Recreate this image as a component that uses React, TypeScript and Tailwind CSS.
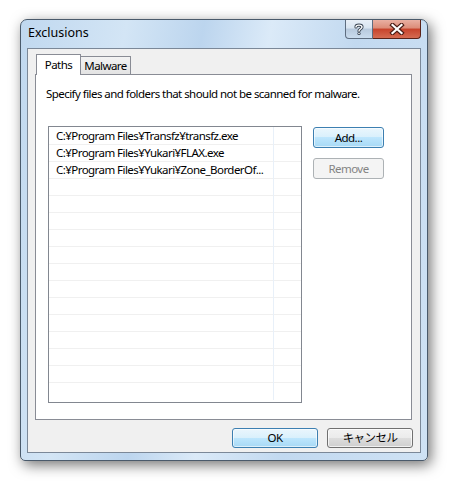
import React from "react";

const font = { fontFamily: '"Noto Sans", "Noto Sans CJK JP", sans-serif' };

function Row({ text }: { text?: string }) {
  return (
    <div className="h-[17px] border-b border-[#f0f0f0] flex items-center pl-[7px] leading-none text-black whitespace-nowrap overflow-hidden">
      {text ?? ""}
    </div>
  );
}

export default function App() {
  const items = [
    "C:¥Program Files¥Transfz¥transfz.exe",
    "C:¥Program Files¥Yukari¥FLAX.exe",
    "C:¥Program Files¥Yukari¥Zone_BorderOf...",
  ];
  const rows = Array.from({ length: 15 }, (_, i) => items[i]);
  return (
    <div className="w-[452px] h-[484px] bg-white pt-[19px] pl-[20px] text-[11.5px] tracking-[-0.55px]" style={font}>
      <div className="relative w-[408px] h-[442px] rounded-t-[7px] rounded-b-[5px] border border-[#4a5a6b] shadow-[3px_4px_14px_rgba(0,0,0,0.55)] bg-[linear-gradient(100deg,#c0d8ef_0%,#d3e5f5_22%,#bcd5ee_38%,#dbeaf8_52%,#c2d9f0_70%,#cfe2f4_100%)] flex flex-col pl-[6px] pr-[6px] pb-[7px]">
        {/* caption */}
        <div className="h-[28px] flex items-start justify-between shrink-0">
          <div className="pl-[1px] pt-[5px] text-[12.5px] leading-[16px] tracking-normal text-black">Exclusions</div>
          <div className="flex">
            <div className="w-[28px] h-[19px] rounded-bl-[4px] border border-t-0 border-[#5e6d80] bg-[linear-gradient(#e8eff7_0%,#d8e4f0_45%,#b7c9dd_50%,#cadcee_100%)] flex items-center justify-center">
              <svg width="10" height="12" viewBox="0 0 10 12">
                <path d="M2 4 C2 1.5 8 1.5 8 4 C8 6 5 6 5 8" fill="none" stroke="#3b4654" strokeWidth="3.2" strokeLinecap="round" />
                <path d="M2 4 C2 1.5 8 1.5 8 4 C8 6 5 6 5 8" fill="none" stroke="#fff" strokeWidth="1.4" strokeLinecap="round" />
                <circle cx="5" cy="10.5" r="1.6" fill="#3b4654" />
                <circle cx="5" cy="10.5" r="0.8" fill="#fff" />
              </svg>
            </div>
            <div className="w-[48px] h-[19px] rounded-br-[4px] border border-t-0 border-l-0 border-[#5a2218] bg-[linear-gradient(#e9b0a2_0%,#dc8c78_45%,#c7432b_50%,#d56b52_100%)] flex items-center justify-center">
              <svg width="16" height="12" viewBox="0 0 16 12">
                <path d="M3.5 2 L12.5 10 M12.5 2 L3.5 10" stroke="#4a1c14" strokeWidth="4.4" strokeLinecap="square" />
                <path d="M3.5 2 L12.5 10 M12.5 2 L3.5 10" stroke="#fff" strokeWidth="2.2" strokeLinecap="square" />
              </svg>
            </div>
          </div>
        </div>
        {/* client */}
        <div className="flex-1 border border-[#7b8898] bg-[#f0f0f0] flex flex-col">
          <div className="pl-[7px] pr-[8px] pt-[5px] flex flex-col">
            <div className="flex items-end h-[20px] pl-[1px] leading-none text-black">
              <div className="relative z-10 -mb-px w-[45px] h-[21px] border border-b-0 border-[#898c95] bg-white flex items-start justify-center pt-[4px]">
                Paths
              </div>
              <div className="w-[50px] h-[18px] border border-l-0 border-b-0 border-[#898c95] bg-[linear-gradient(#f3f3f3,#e3e3e3)] flex items-center justify-center">
                Malware
              </div>
            </div>
            <div className="w-[377px] h-[346px] border border-[#898c95] bg-white flex flex-col">
              <div className="pl-[10px] pt-[11px] h-[51px] leading-[16px] text-black">
                Specify files and folders that should not be scanned for malware.
              </div>
              <div className="flex pl-[12px]">
                <div className="relative w-[254px] h-[277px] border border-[#828790] pt-px">
                  <div className="absolute top-0 bottom-[2px] left-[224px] w-px bg-[#e8f0f9]" />
                  {rows.map((t, i) => (
                    <Row key={i} text={t} />
                  ))}
                </div>
                <div className="ml-[11px] pt-px flex flex-col gap-[10px] leading-none">
                  <div className="w-[71px] h-[21px] rounded-[3px] border border-[#3c7fb1] bg-[linear-gradient(#eaf6fd_0%,#d9f0fc_50%,#bee6fd_50%,#a7d9f5_100%)] shadow-[inset_0_0_0_1px_rgba(255,255,255,0.6)] flex items-center justify-center text-black">
                    Add...
                  </div>
                  <div className="w-[71px] h-[21px] rounded-[3px] border border-[#adb2b5] bg-[#f4f4f4] flex items-center justify-center text-[#838383]">
                    Remove
                  </div>
                </div>
              </div>
            </div>
          </div>
          <div className="flex justify-end gap-[9px] pr-[7px] pt-[8px] leading-none">
            <div className="w-[86px] h-[20px] rounded-[3px] border border-[#3c7fb1] bg-[linear-gradient(#eaf6fd_0%,#d9f0fc_50%,#bee6fd_50%,#a7d9f5_100%)] shadow-[inset_0_0_0_1px_rgba(255,255,255,0.6)] flex items-center justify-center text-black">
              OK
            </div>
            <div className="w-[86px] h-[20px] rounded-[3px] border border-[#707070] bg-[linear-gradient(#f2f2f2_0%,#ebebeb_50%,#dddddd_50%,#cfcfcf_100%)] shadow-[inset_0_0_0_1px_rgba(255,255,255,0.7)] flex items-center justify-center text-black">
              キャンセル
            </div>
          </div>
        </div>
      </div>
    </div>
  );
}
